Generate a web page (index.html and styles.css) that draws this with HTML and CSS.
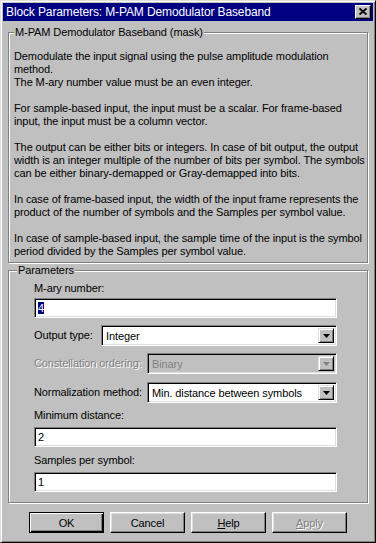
FILE: index.html
```
<!DOCTYPE html>
<html lang="en">
<head>
  <link rel="stylesheet" href="styles.css">
</head>
<body>
  <div class="window">
    <div class="titlebar">
      <span class="title">Block Parameters: M-PAM Demodulator Baseband</span>
      <span class="close">
        <svg width="8" height="7" viewBox="0 0 8 7"><path d="M0.5 0.5 L7.5 6.5 M7.5 0.5 L0.5 6.5" stroke="#000" stroke-width="1.9"/></svg>
      </span>
    </div>

    <fieldset class="group mask">
      <legend>M-PAM Demodulator Baseband (mask)</legend>
      <p>Demodulate the input signal using the pulse amplitude modulation<br>method.<br>The M-ary number value must be an even integer.</p>
      <p>For sample-based input, the input must be a scalar. For frame-based<br>input, the input must be a column vector.</p>
      <p>The output can be either bits or integers. In case of bit output, the output<br>width is an integer multiple of the number of bits per symbol. The symbols<br>can be either binary-demapped or Gray-demapped into bits.</p>
      <p>In case of frame-based input, the width of the input frame represents the<br>product of the number of symbols and the Samples per symbol value.</p>
      <p>In case of sample-based input, the sample time of the input is the symbol<br>period divided by the Samples per symbol value.</p>
    </fieldset>

    <fieldset class="group params">
      <legend>Parameters</legend>
      <div class="fields">
        <div class="label first">M-ary number:</div>
        <div class="edit gap-3"><span class="selected">4</span></div>

        <div class="row gap-7">
          <span class="label short">Output type:</span>
          <div class="combo">
            <span class="value">Integer</span>
            <span class="drop"><svg width="7" height="4" viewBox="0 0 7 4"><path d="M0 0H7L3.5 4Z" fill="#000"/></svg></span>
          </div>
        </div>

        <div class="row gap-7">
          <span class="label long disabled">Constellation ordering:</span>
          <div class="combo off">
            <span class="value">Binary</span>
            <span class="drop"><svg width="7" height="4" viewBox="0 0 7 4"><path d="M0 0H7L3.5 4Z" fill="#808080"/></svg></span>
          </div>
        </div>

        <div class="row gap-8">
          <span class="label long">Normalization method:</span>
          <div class="combo">
            <span class="value">Min. distance between symbols</span>
            <span class="drop"><svg width="7" height="4" viewBox="0 0 7 4"><path d="M0 0H7L3.5 4Z" fill="#000"/></svg></span>
          </div>
        </div>

        <div class="label gap-6">Minimum distance:</div>
        <div class="edit gap-5">2</div>

        <div class="label gap-7">Samples per symbol:</div>
        <div class="edit gap-5">1</div>
      </div>
    </fieldset>

    <div class="buttons">
      <span class="btn default">OK</span>
      <span class="btn">Cancel</span>
      <span class="btn"><u>H</u>elp</span>
      <span class="btn disabled"><u>A</u>pply</span>
    </div>
  </div>
</body>
</html>
```

FILE: styles.css
```
body {
  margin: 0;
  font-family: "Liberation Sans", Arial, sans-serif;
  font-size: 11px;
  letter-spacing: -0.1px;
  color: #000;
}

.window {
  width: 376px;
  height: 543px;
  box-sizing: border-box;
  background: #c0c0c0;
  border: 1px solid;
  border-color: #dfdfdf #000 #000 #dfdfdf;
  box-shadow: inset 1px 1px #fff, inset -1px -1px #808080;
  padding: 2px;
  display: flex;
  flex-direction: column;
}

.titlebar {
  height: 18px;
  background: #000080;
  color: #fff;
  display: flex;
  align-items: center;
  padding: 0 2px 0 3px;
}

.title {
  flex: 1;
  font-size: 12px;
  letter-spacing: -0.12px;
  white-space: nowrap;
}

.close {
  width: 16px;
  height: 14px;
  box-sizing: border-box;
  background: #c0c0c0;
  border: 1px solid;
  border-color: #fff #000 #000 #fff;
  box-shadow: inset -1px -1px #808080;
  display: flex;
  align-items: center;
  justify-content: center;
  padding-bottom: 1px;
}

.close svg {display: block;}

/* etched group boxes */
.group {
  border: 1px solid #808080;
  box-shadow: 1px 1px #fff, inset 1px 1px #fff;
  margin: 0 5px;
  min-width: 0;
}

.group legend {
  line-height: 13px;
  padding: 0 1px;
  background: #c0c0c0;
}

.mask {
  margin-top: 5px;
  padding: 11px 5px 4px 5px;
}

.mask p {
  margin: 0 0 13px 0;
  line-height: 13px;
  white-space: nowrap;
}

.mask p:last-child {margin-bottom: 0;}

.params {
  margin-top: 1px;
  padding: 5px 30px 10px 8px;
}

.fields {padding-left: 17px;}

.label {
  line-height: 13px;
  white-space: nowrap;
}

.label.short {width: 67px; flex: none;}
.label.long {width: 113px; flex: none;}

.disabled {
  color: #808080;
  text-shadow: 1px 1px #fff;
}

.gap-3 {margin-top: 3px;}
.gap-5 {margin-top: 5px;}
.gap-6 {margin-top: 6px;}
.gap-7 {margin-top: 7px;}
.gap-8 {margin-top: 8px;}

.row {
  display: flex;
  align-items: center;
}

.edit, .combo {
  box-sizing: border-box;
  background: #fff;
  border: 1px solid;
  border-color: #808080 #fff #fff #808080;
  box-shadow: inset 1px 1px #000, inset -1px -1px #dfdfdf;
}

.edit {
  height: 20px;
  padding: 1px 3px 0 3px;
  line-height: 16px;
}

.selected {
  background: #000080;
  color: #fff;
}

.combo {
  flex: 1;
  height: 21px;
  display: flex;
  align-items: stretch;
  padding: 2px;
}

.combo .value {
  flex: 1;
  padding-left: 2px;
  line-height: 17px;
  white-space: nowrap;
}

.combo.off {background: #c0c0c0;}
.combo.off .value {color: #808080;}

.drop {
  width: 16px;
  box-sizing: border-box;
  background: #c0c0c0;
  border: 1px solid;
  border-color: #dfdfdf #000 #000 #dfdfdf;
  box-shadow: inset 1px 1px #fff, inset -1px -1px #808080;
  display: flex;
  align-items: center;
  justify-content: center;
}

.drop svg {display: block;}

.buttons {
  display: flex;
  justify-content: center;
  gap: 6px;
  margin-top: 9px;
}

.btn {
  width: 75px;
  height: 21px;
  box-sizing: border-box;
  background: #c0c0c0;
  border: 1px solid;
  border-color: #fff #000 #000 #fff;
  box-shadow: inset -1px -1px #808080, inset 1px 1px #dfdfdf;
  display: flex;
  align-items: center;
  justify-content: center;
}

.btn.default {
  border-color: #000;
  box-shadow: inset 1px 1px #fff, inset -1px -1px #000, inset -2px -2px #808080;
}

.btn u {text-decoration: underline;}
```
